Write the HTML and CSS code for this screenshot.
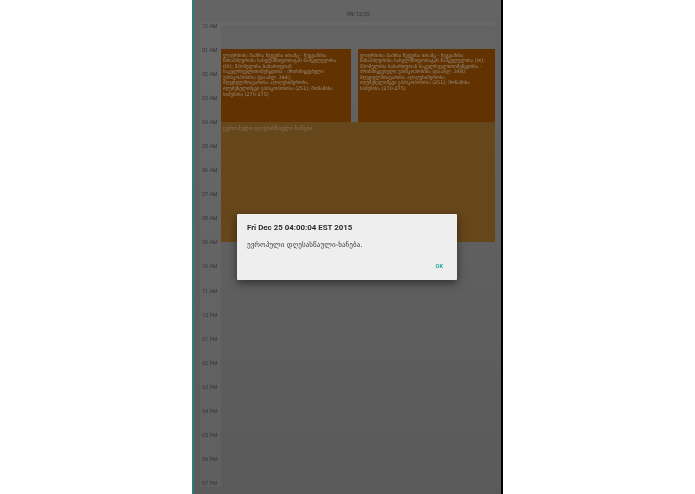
FILE: index.html
```html
<!DOCTYPE html>
<html lang="ka">
<head>
<meta charset="utf-8">
<title>Calendar</title>
<link rel="stylesheet" href="styles.css">
</head>
<body>
<div class="device">
  <div class="day-title">FRI 12/25</div>
  <div class="schedule">
    <div class="hours">
      <span>12 AM</span><span>01 AM</span><span>02 AM</span><span>03 AM</span><span>04 AM</span>
      <span>05 AM</span><span>06 AM</span><span>07 AM</span><span>08 AM</span><span>09 AM</span>
      <span>10 AM</span><span>11 AM</span><span>12 PM</span><span>01 PM</span><span>02 PM</span>
      <span>03 PM</span><span>04 PM</span><span>05 PM</span><span>06 PM</span><span>07 PM</span>
    </div>
    <div class="day">
      <div class="event event-left">ლიტრსისა მაძისა ჩვევისა ითამც - ზეგვამისა<br>წინამძღვრისა სახელმწიფოთაგან წამყვლელისა<br>(IX); მპომელისა სახარიფთან<br>საკვლრევლითიმეწყდისა - ძრისმიყვებელი<br>უპისკოპოსისა (დააბლ. 344);<br>მღვდელმთავარისა აღიღესიმეროსა,<br>იღუმენელიმყვი ეპისკოპოსისა (251); მოწამისა<br>სიმეჩისა (270-275)</div>
      <div class="event event-right">ლიტრსისა მაძისა ჩვევისა ითამც - ზეგვამისა<br>წინამძღვრისა სახელმწიფოთაგან წამყვლელისა (IX);<br>მპომელისა სახარიფთან საკვლრევლითიმეწყდისა -<br>ძრისმიყვებელი უპისკოპოსისა (დააბლ. 344);<br>მღვდელმთავარისა აღიღესიმეროსა,<br>იღუმენელიმყვი ეპისკოპოსისა (251); მოწამისა<br>სიმეჩისა (270-275)</div>
      <div class="event event-wide">ევროპული დღესასწაული ხანება.</div>
    </div>
  </div>
</div>
<div class="dialog">
  <div class="dialog-title">Fri Dec 25 04:00:04 EST 2015</div>
  <div class="dialog-body">ევროპული დღესასწაული-ხანება.</div>
  <div class="dialog-actions"><span class="dialog-ok">OK</span></div>
</div>
</body>
</html>
```
FILE: styles.css
```css
html, body {
  margin: 0;
  height: 494px;
  overflow: hidden;
  background: #fff;
  font-family: Roboto, "DejaVu Sans", sans-serif;
}
.device {
  box-sizing: border-box;
  width: 311px;
  height: 494px;
  margin-left: 192px;
  padding-left: 6px;
  padding-right: 6px;
  background: linear-gradient(#646464, #5a5a5a);
  border-left: 2px solid #2e7d70;
  border-right: 2px solid #000;
  filter: blur(0.35px);
}
.day-title {
  height: 22px;
  padding-top: 11px;
  box-sizing: border-box;
  padding-left: 22px;
  text-align: center;
  font-size: 5.2px;
  line-height: 6px;
  color: #303030;
}
.schedule {
  display: flex;
  height: 465px;
}
.hours {
  width: 21px;
  flex: none;
  padding-top: 1px;
  background: rgba(255, 255, 255, 0.035);
  display: flex;
  flex-direction: column;
  color: #363636;
  font-size: 5.3px;
  line-height: 6px;
  text-align: right;
}
.hours span {
  height: 24.05px;
  flex: none;
  padding-right: 3.5px;
}
.day {
  flex: 1;
  display: grid;
  grid-template-columns: 130px 7px 1fr;
  grid-template-rows: 24px 73px 120px 1fr;
  border-top: 3px solid rgba(255, 255, 255, 0.035);
}
.event {
  box-sizing: border-box;
  padding: 3.5px 2px;
  font-family: "DejaVu Sans", sans-serif;
  font-size: 4.85px;
  line-height: 5.6px;
  white-space: nowrap;
  overflow: hidden;
  color: #9a8f80;
}
.event-left {
  grid-column: 1;
  grid-row: 2;
  background: #623300;
}
.event-right {
  grid-column: 3;
  grid-row: 2;
  background: #623300;
}
.event-wide {
  grid-column: 1 / -1;
  grid-row: 3;
  background: #66461b;
  color: #8a795c;
  font-size: 5.7px;
}
.dialog {
  position: absolute;
  left: 237px;
  top: 214px;
  width: 220px;
  height: 66px;
  box-sizing: border-box;
  padding: 9px 10px 0;
  background: #eeeeee;
  border-radius: 1px;
  box-shadow: 0 3px 8px rgba(0, 0, 0, 0.5);
  filter: blur(0.3px);
}
.dialog-title {
  font-size: 7.9px;
  line-height: 10px;
  font-weight: 700;
  color: #2b2b2b;
}
.dialog-body {
  margin-top: 6.5px;
  font-family: "DejaVu Sans", sans-serif;
  font-size: 7.2px;
  line-height: 10px;
  color: #3a3a3a;
}
.dialog-actions {
  display: flex;
  justify-content: flex-end;
  margin-top: 13px;
  padding-right: 4px;
}
.dialog-ok {
  font-size: 5.6px;
  line-height: 7px;
  font-weight: 700;
  color: #26a69a;
}
```
